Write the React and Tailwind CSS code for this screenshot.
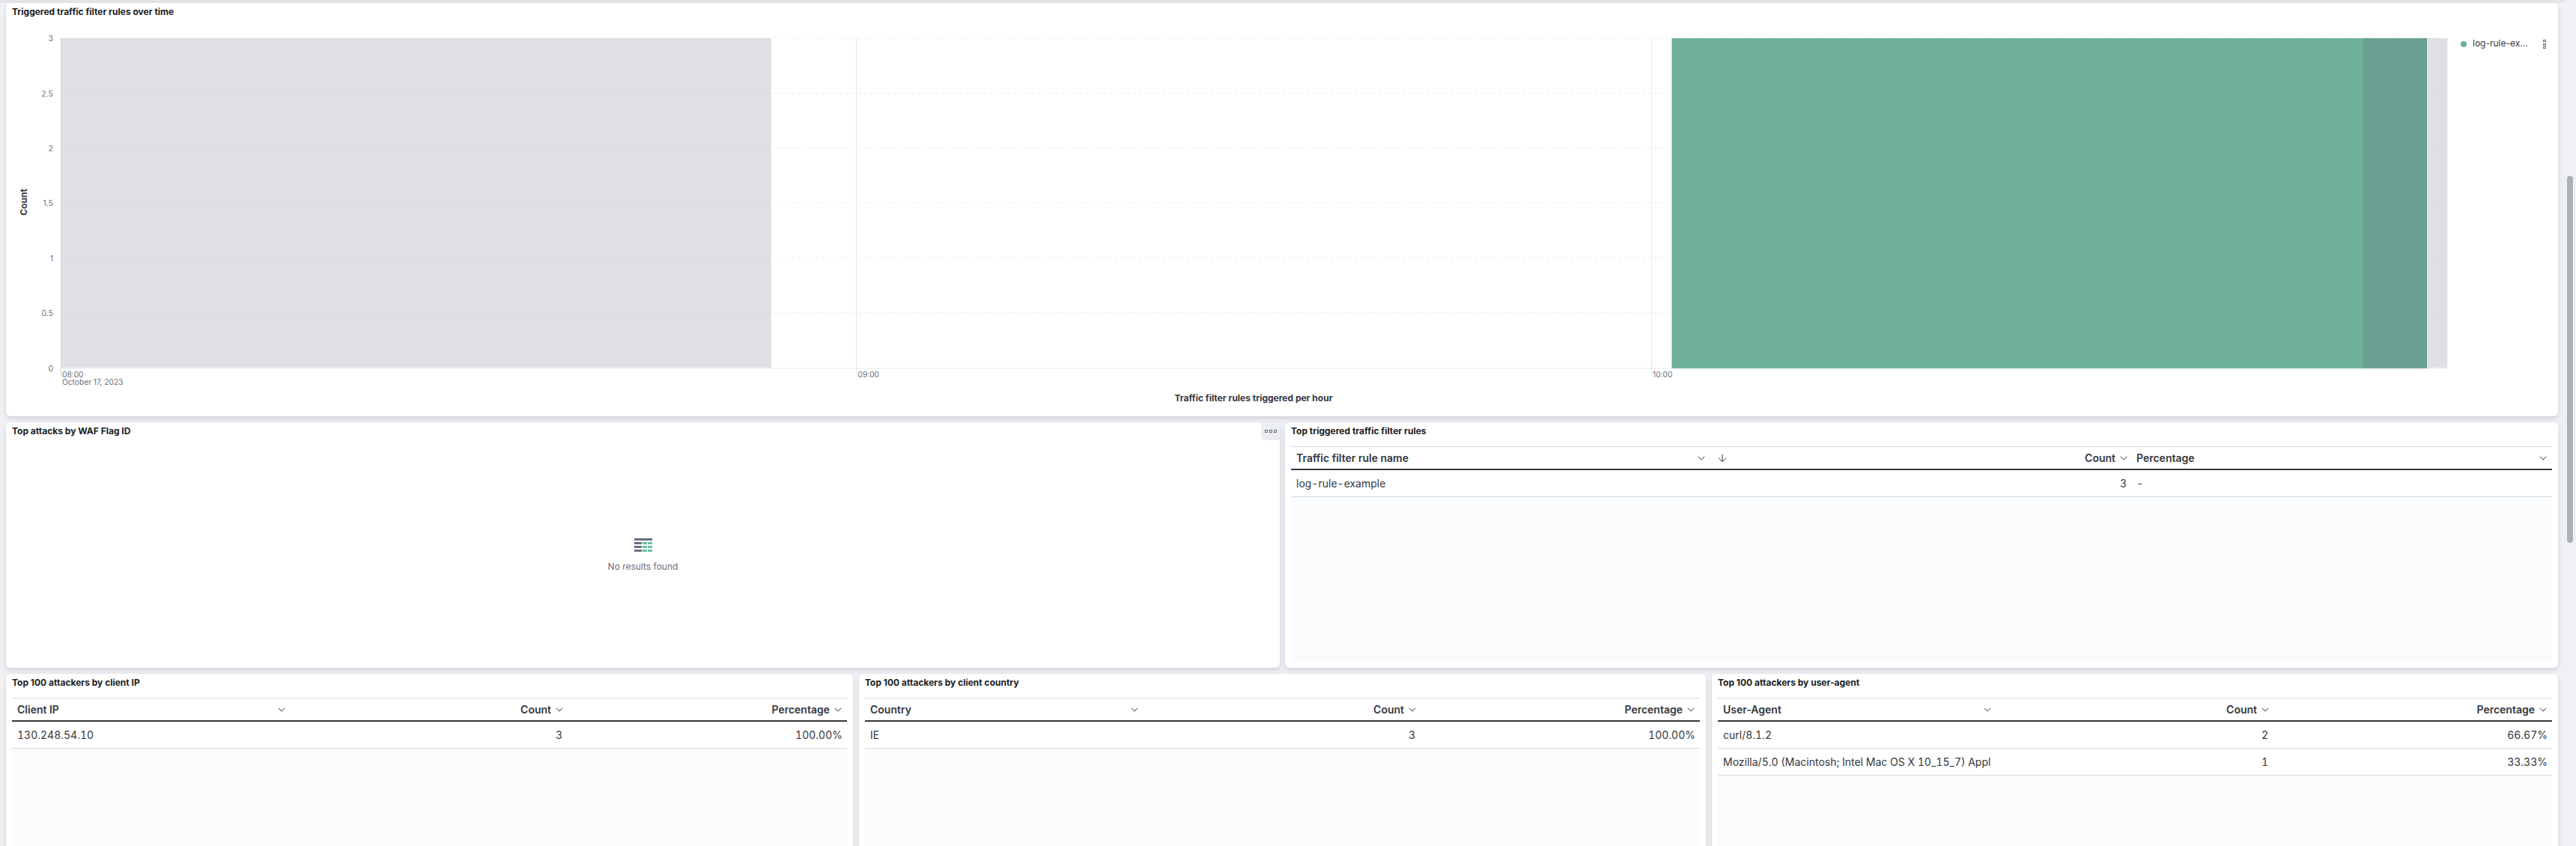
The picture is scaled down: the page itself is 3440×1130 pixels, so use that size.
import { ChevronDown, ArrowDown } from "lucide-react"

const panel = "bg-white rounded-md shadow-[0_2px_5px_rgba(0,0,0,0.1),0_6px_10px_rgba(60,66,80,0.06)]"
const title = "text-[12px] leading-[16px] font-bold text-[#1a1c21]"

const yTicks = [
    { label: "3", y: 51 },
    { label: "2.5", y: 124.5 },
    { label: "2", y: 198 },
    { label: "1.5", y: 271 },
    { label: "1", y: 344.5 },
    { label: "0.5", y: 418 },
]

const Chart = () => {
    return (
        <svg width="3268" height="530" className="block" style={{ fontFamily: "Inter, sans-serif" }}>
            <rect x="73" y="47" width="949" height="441" fill="#dfe0e4" />
            <rect x="3233" y="47" width="27" height="441" fill="#dfe0e4" />
            {yTicks.map((t) => (
                <g key={t.label}>
                    <line x1="73" x2="3260" y1={t.y - 4} y2={t.y - 4} stroke="#d3d4da" strokeOpacity="0.45" strokeDasharray="4 4" />
                    <text x="63" y={t.y} textAnchor="end" fontSize="10.5" fill="#69707d">{t.label}</text>
                </g>
            ))}
            <text x="63" y="491.5" textAnchor="end" fontSize="10.5" fill="#69707d">0</text>
            <line x1="73" x2="3260" y1="488" y2="488" stroke="#f1f2f6" strokeWidth="2" />
            <line x1="73.5" x2="73.5" y1="47" y2="499" stroke="#d3d5dc" />
            <line x1="1135.5" x2="1135.5" y1="47" y2="499" stroke="#e8e9ee" />
            <line x1="2197.5" x2="2197.5" y1="47" y2="499" stroke="#e8e9ee" />
            <line x1="3260" x2="3260" y1="47" y2="488" stroke="#e3e4e9" />
            <rect x="2224.5" y="47" width="923" height="441" fill="#6eb09a" />
            <rect x="3147" y="47" width="86" height="441" fill="#6ba192" />
            <text x="75" y="500" fontSize="10.2" fill="#69707d">08:00</text>
            <text x="75" y="510" fontSize="10.2" fill="#69707d">October 17, 2023</text>
            <text x="1137.5" y="500" fontSize="10.2" fill="#69707d">09:00</text>
            <text x="2199" y="500" fontSize="10.2" fill="#69707d">10:00</text>
            <text transform="translate(28 266) rotate(-90)" textAnchor="middle" fontSize="12" fontWeight="700" fill="#343741">Count</text>
        </svg>
    )
}

const EmptyIcon = () => {
    return (
        <svg width="24" height="18" viewBox="0 0 24 18">
            <rect x="0" y="0" width="24" height="3" fill="#69707d" />
            <rect x="0" y="5" width="10" height="3" fill="#69707d" />
            <rect x="0" y="10" width="10" height="3" fill="#69707d" />
            <rect x="0" y="15" width="10" height="3" fill="#69707d" />
            {[5, 10, 15].map((y) => (
                <g key={y} fill="#6dc2a3">
                    <rect x="11" y={y} width="6" height="3" />
                    <rect x="18" y={y} width="6" height="3" />
                </g>
            ))}
        </svg>
    )
}

const DotsHorizontal = () => {
    return (
        <div className="flex flex-row gap-[2px]">
            <span className="w-[4px] h-[4px] border border-[#69707d]" />
            <span className="w-[4px] h-[4px] border border-[#69707d]" />
            <span className="w-[4px] h-[4px] border border-[#69707d]" />
        </div>
    )
}

const DotsVertical = () => {
    return (
        <div className="flex flex-col gap-[1.5px] mt-[1px]">
            <span className="w-[4px] h-[3px] border border-[#69707d]" />
            <span className="w-[4px] h-[3px] border border-[#69707d]" />
            <span className="w-[4px] h-[3px] border border-[#69707d]" />
        </div>
    )
}

const HeaderCell = ({ label, right, sorted }) => {
    return (
        <div className={"flex items-center min-w-0 pl-[7px] pr-[2px] last:pr-[4px] gap-[3px] " + (right ? "justify-end" : "")}>
            <span className={"text-[14px] font-semibold text-[#343741] whitespace-nowrap " + (right ? "" : "flex-1")}>{label}</span>
            <ChevronDown size={16} strokeWidth={1.5} className="text-[#343741] shrink-0" />
            {sorted && <ArrowDown size={16} strokeWidth={1.5} className="text-[#343741] shrink-0 ml-[8.5px] mr-[-25.5px]" />}
        </div>
    )
}

const DataTable = ({ name, columns, template, rows }) => {
    return (
        <div className={panel + " flex flex-col p-2 pt-[4px] min-w-0 h-full"}>
            <div className={title + " mb-[12px]"}>{name}</div>
            <div className="flex-1 flex flex-col bg-[#fafbfd] min-h-0">
                <div className={"grid h-[29px] bg-white border-t border-[#d3dae6] border-b-2 border-b-[#343741] box-content " + template}>
                    {columns.map((c) => (
                        <HeaderCell key={c.label} label={c.label} right={c.right} sorted={c.sorted} />
                    ))}
                </div>
                {rows.map((row) => (
                    <div key={row[0]} className={"grid h-[36px] bg-white border-b border-[#d3dae6] " + template}>
                        {row.map((v, i) => (
                            <div key={i} className={"flex items-center overflow-hidden whitespace-nowrap pl-[7px] pr-[6px] text-[14px] tabular-nums text-[#343741] " + (columns[i].right ? "justify-end" : "")}>
                                <span className={i === 0 ? "overflow-hidden" : ""}>{v}</span>
                            </div>
                        ))}
                    </div>
                ))}
            </div>
        </div>
    )
}

export default function App() {
    const countCols = (first) => [{ label: first }, { label: "Count", right: true }, { label: "Percentage", right: true }]

    return (
        <div className="flex h-[1130px] w-[3440px] overflow-hidden bg-[#f0f1f5] text-[#343741]" style={{ fontFamily: "Inter, sans-serif" }}>
            <div className="w-[3424px] shrink-0 flex flex-col bg-[#f0f1f5]">
                <div className="h-[4px] bg-[#e3e4e8] shrink-0" />
                <div className="flex flex-col gap-2 pl-2 pr-2 flex-1 min-h-0">
                    <div className={panel + " h-[552px] shrink-0 flex flex-col pl-0"}>
                        <div className={title + " pl-2 pt-[4px]"}>Triggered traffic filter rules over time</div>
                        <div className="flex flex-1 min-h-0 -mt-[20px]">
                            <div className="w-[3268px] shrink-0 flex flex-col">
                                <Chart />
                                <div className="text-center text-[12px] font-bold text-[#343741] mt-[-11px] pl-[64px]">Traffic filter rules triggered per hour</div>
                            </div>
                            <div className="flex-1 flex items-start pt-[48px] pl-[10px] pr-[16px]">
                                <span className="w-2 h-2 rounded-full bg-[#6eb09a] mt-[3px] mr-[8px] shrink-0" />
                                <span className="text-[12px] leading-[14px] text-[#343741] flex-1 -mt-[1px] whitespace-nowrap">log-rule-ex...</span>
                                <DotsVertical />
                            </div>
                        </div>
                    </div>
                    <div className="grid grid-cols-[1701px_1700px] gap-[7px] h-[328px] shrink-0">
                        <div className={panel + " flex flex-col relative"}>
                            <div className={title + " pl-2 pt-[4px]"}>Top attacks by WAF Flag ID</div>
                            <div className="flex-1 flex flex-col items-center justify-center pt-[9px]">
                                <EmptyIcon />
                                <div className="text-[12px] text-[#69707d] mt-[11px]">No results found</div>
                            </div>
                            <div className="absolute top-0 right-0 w-[25px] h-[24px] bg-[#eceef2] rounded-bl-md rounded-tr-md flex items-center justify-center">
                                <DotsHorizontal />
                            </div>
                        </div>
                        <DataTable
                            name="Top triggered traffic filter rules"
                            template="grid-cols-[560px_562px_562px]"
                            columns={[{ label: "Traffic filter rule name", sorted: true }, { label: "Count", right: true }, { label: "Percentage" }]}
                            rows={[["log-rule-example", "3", "-"]]}
                        />
                    </div>
                    <div className="grid grid-cols-[1131px_1131px_1130px] gap-2 flex-1 min-h-0 mb-[-12px]">
                        <DataTable
                            name="Top 100 attackers by client IP"
                            template="grid-cols-[370px_371px_374px]"
                            columns={countCols("Client IP")}
                            rows={[["130.248.54.10", "3", "100.00%"]]}
                        />
                        <DataTable
                            name="Top 100 attackers by client country"
                            template="grid-cols-[370px_371px_374px]"
                            columns={countCols("Country")}
                            rows={[["IE", "3", "100.00%"]]}
                        />
                        <DataTable
                            name="Top 100 attackers by user-agent"
                            template="grid-cols-[370px_371px_373px]"
                            columns={countCols("User-Agent")}
                            rows={[
                                ["curl/8.1.2", "2", "66.67%"],
                                ["Mozilla/5.0 (Macintosh; Intel Mac OS X 10_15_7) AppleWebKit/537.36", "1", "33.33%"],
                            ]}
                        />
                    </div>
                </div>
            </div>
            <div className="w-4 shrink-0 bg-[#f0f1f5] pl-1 pr-1 pt-[235px]">
                <div className="w-2 h-[490px] rounded-full bg-[#abb0b9]" />
            </div>
        </div>
    )
}
